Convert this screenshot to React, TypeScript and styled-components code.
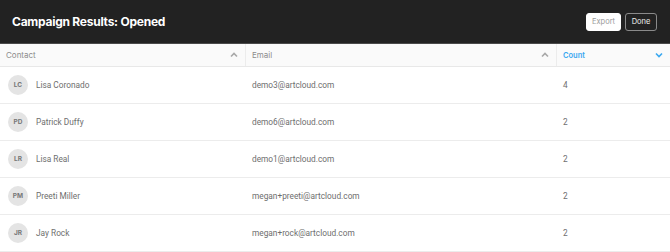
import React from "react";
import styled, { createGlobalStyle } from "styled-components";

const GlobalStyle = createGlobalStyle`
  body {
    margin: 0;
    background: #ffffff;
    font-family: Inter, "Liberation Sans", sans-serif;
  }
`;

type Row = { initials: string; name: string; email: string; count: number };

const rows: Row[] = [
  { initials: "LC", name: "Lisa Coronado", email: "demo3@artcloud.com", count: 4 },
  { initials: "PD", name: "Patrick Duffy", email: "demo6@artcloud.com", count: 2 },
  { initials: "LR", name: "Lisa Real", email: "demo1@artcloud.com", count: 2 },
  { initials: "PM", name: "Preeti Miller", email: "megan+preeti@artcloud.com", count: 2 },
  { initials: "JR", name: "Jay Rock", email: "megan+rock@artcloud.com", count: 2 },
];

const Chevron = ({ down, color }: { down?: boolean; color: string }) => (
  <svg width="8" height="6" viewBox="0 0 8 6">
    <path
      d={down ? "M1 1.5 L4 4.5 L7 1.5" : "M1 4.5 L4 1.5 L7 4.5"}
      fill="none"
      stroke={color}
      strokeWidth="1.6"
    />
  </svg>
);

const App = () => {
  return (
    <Page>
      <GlobalStyle />
      <TopBar>
        <Title>Campaign Results: Opened</Title>
        <Actions>
          <Button variant="light">Export</Button>
          <Button variant="dark">Done</Button>
        </Actions>
      </TopBar>
      <Table>
        <HeadRow>
          <HeadCell>
            <span>Contact</span>
            <Chevron color="#a8a8a8" />
          </HeadCell>
          <HeadCell>
            <span>Email</span>
            <Chevron color="#a8a8a8" />
          </HeadCell>
          <HeadCell active>
            <span>Count</span>
            <Chevron down color="#3aa8f0" />
          </HeadCell>
        </HeadRow>
        {rows.map((r) => (
          <BodyRow key={r.email}>
            <Cell>
              <Avatar>{r.initials}</Avatar>
              <Name>{r.name}</Name>
            </Cell>
            <Cell>{r.email}</Cell>
            <Cell>{r.count}</Cell>
          </BodyRow>
        ))}
      </Table>
    </Page>
  );
};

export default App;

const Page = styled.div`
  width: 670px;
  height: 252px;
  overflow: hidden;
`;

const TopBar = styled.div`
  height: 43px;
  background: #222222;
  border-bottom: 1px solid #4a4a4a;
  display: flex;
  align-items: center;
  justify-content: space-between;
  padding: 0 13px 0 12px;
`;

const Title = styled.h1`
  margin: 0;
  font-size: 12px;
  font-weight: 700;
  color: #ffffff;
  letter-spacing: -0.25px;
`;

const Actions = styled.div`
  display: flex;
  gap: 4px;
`;

const Button = styled.button<{ variant: "light" | "dark" }>`
  height: 18px;
  padding: 0 4px;
  min-width: ${(p) => (p.variant === "light" ? "35px" : "32px")};
  border-radius: 3px;
  font-family: Inter, "Liberation Sans", sans-serif;
  font-size: 7.5px;
  cursor: pointer;
  border: 1px solid ${(p) => (p.variant === "light" ? "#ffffff" : "#8a8a8a")};
  background: ${(p) => (p.variant === "light" ? "#ffffff" : "#222222")};
  color: ${(p) => (p.variant === "light" ? "#9a9a9a" : "#f0f0f0")};
`;

const Table = styled.div`
  display: flex;
  flex-direction: column;
`;

const Grid = styled.div`
  display: grid;
  grid-template-columns: 246px 311px 1fr;
`;

const HeadRow = styled(Grid)`
  height: 22px;
  background: #fafafa;
  border-bottom: 1px solid #e8e8e8;
`;

const HeadCell = styled.div<{ active?: boolean }>`
  display: flex;
  align-items: center;
  justify-content: space-between;
  padding: 0 7px 0 6px;
  font-size: ${(p) => (p.active ? "7.5px" : "8px")};
  font-weight: ${(p) => (p.active ? 600 : 400)};
  color: ${(p) => (p.active ? "#3aa8f0" : "#8c8c8c")};
  border-right: ${(p) => (p.active ? "none" : "1px solid #ececec")};
`;

const BodyRow = styled(Grid)`
  height: 36px;
  border-bottom: 1px solid #ececec;
`;

const Cell = styled.div`
  display: flex;
  align-items: center;
  padding: 0 6px;
  font-family: Roboto, "Liberation Sans", sans-serif;
  font-size: 8.3px;
  color: #6e6e6e;
`;

const Avatar = styled.div`
  width: 20px;
  height: 20px;
  border-radius: 50%;
  background: #e4e4e4;
  color: #777777;
  font-family: Inter, "Liberation Sans", sans-serif;
  font-size: 6.5px;
  font-weight: 700;
  display: flex;
  align-items: center;
  justify-content: center;
  margin-left: 2px;
  flex: 0 0 auto;
`;

const Name = styled.span`
  margin-left: 8px;
`;
